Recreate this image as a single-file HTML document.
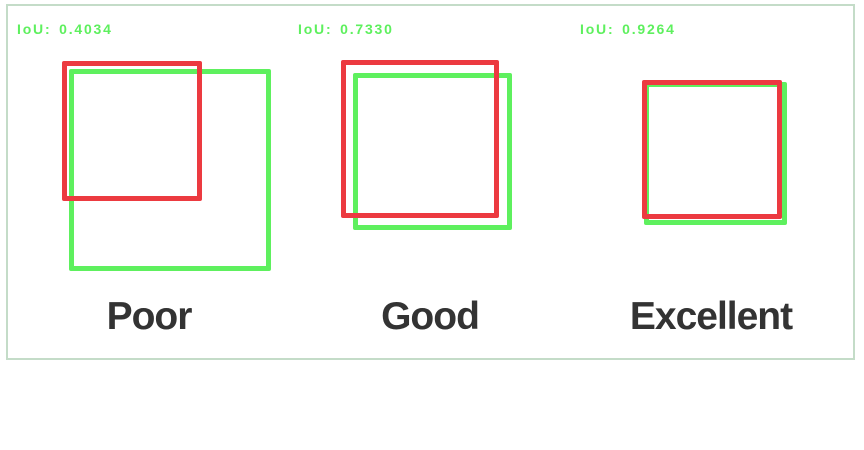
<!DOCTYPE html>
<html><head><style>
html,body{margin:0;padding:0;background:#fff;width:864px;height:450px;overflow:hidden}
.frame{position:absolute;left:6px;top:4px;width:845px;height:352px;border:2px solid #c4dcc8}
.b{position:absolute;box-sizing:border-box;border:5px solid;border-radius:2px}
.g{border-color:#5ef05e}.r{border-color:#ec3a40}
.lab{position:absolute;top:21px;font:bold 14px "Liberation Sans",sans-serif;color:#5ef05e;letter-spacing:1.8px;word-spacing:2px}
.t{position:absolute;top:295px;font:bold 39px "Liberation Sans",sans-serif;color:#333;letter-spacing:-1px;transform:translateX(-50%)}
</style></head><body>
<div class="frame"></div>
<div class="lab" style="left:17px">IoU: 0.4034</div>
<div class="lab" style="left:298px">IoU: 0.7330</div>
<div class="lab" style="left:580px">IoU: 0.9264</div>
<div class="b g" style="left:69px;top:69px;width:202px;height:202px"></div>
<div class="b r" style="left:62px;top:61px;width:140px;height:140px"></div>
<div class="b g" style="left:353px;top:73px;width:159px;height:157px"></div>
<div class="b r" style="left:341px;top:60px;width:158px;height:158px"></div>
<div class="b g" style="left:644px;top:82px;width:143px;height:143px"></div>
<div class="b r" style="left:642px;top:80px;width:140px;height:139px"></div>
<div class="t" style="left:149px">Poor</div>
<div class="t" style="left:430px">Good</div>
<div class="t" style="left:711px">Excellent</div>
</body></html>
